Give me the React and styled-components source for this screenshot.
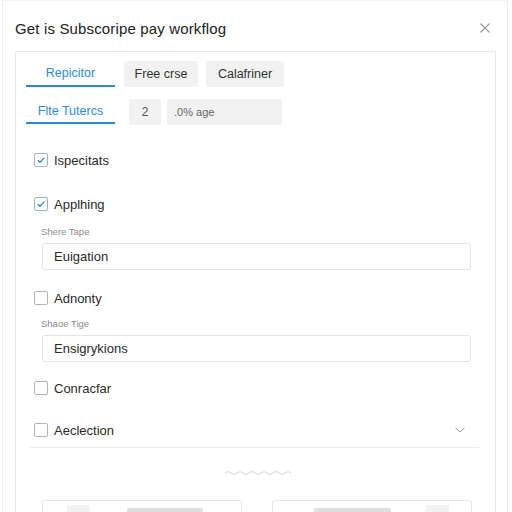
import React from 'react'
import styled, { createGlobalStyle } from 'styled-components'

const Global = createGlobalStyle`
    html, body {
        margin: 0;
        padding: 0;
        background: #ffffff;
    }
    body {
        font-family: "Liberation Sans", Arial, sans-serif;
        color: #2b2b2b;
        overflow: hidden;
    }
`

const Modal = styled.div`
    width: 506px;
    height: 520px;
    margin-left: 2px;
    border-left: 1px solid #ededed;
    border-right: 1px solid #ededed;
    border-top: 1px solid #f3f3f3;
    box-sizing: border-box;
    padding: 0 8px 0 12px;
    overflow: hidden;
`

const Header = styled.div`
    display: flex;
    align-items: center;
    justify-content: space-between;
    height: 50px;
    padding-top: 4px;
    box-sizing: border-box;
`

const Title = styled.h2`
    margin: 0;
    font-size: 15px;
    font-weight: 400;
    color: #222;
    letter-spacing: 0.15px;
`

const Close = styled.button`
    border: 0;
    background: none;
    padding: 0;
    margin-right: 8px;
    width: 12px;
    height: 12px;
    display: flex;
`

const Panel = styled.div`
    width: 481px;
    border: 1px solid #e9e9e9;
    border-bottom: 0;
    padding: 9px 10px 0 10px;
    box-sizing: border-box;
    height: 470px;
`

const TabRow = styled.div`
    display: flex;
    align-items: stretch;
    height: ${p => p.h}px;
    margin-top: ${p => p.mt || 0}px;
`

const Tab = styled.div`
    width: 89px;
    display: flex;
    align-items: center;
    justify-content: center;
    font-size: 12.5px;
    color: #2b8ad6;
    border-bottom: 2px solid #2b8ad6;
    box-sizing: border-box;
    margin-right: ${p => p.mr}px;
`

const Chip = styled.div`
    width: ${p => p.w}px;
    margin-right: ${p => p.mr || 0}px;
    display: flex;
    align-items: center;
    justify-content: ${p => (p.left ? 'flex-start' : 'center')};
    padding-left: ${p => (p.left ? 7 : 0)}px;
    box-sizing: border-box;
    background: #f1f1f1;
    border-radius: 2px;
    font-size: ${p => p.fs || 12.5}px;
    color: ${p => p.c || '#333'};
    box-shadow: ${p => (p.shadow ? '0 1px 1px rgba(0,0,0,0.06)' : 'none')};
`

const List = styled.div`
    padding-left: 8px;
`

const CheckRow = styled.label`
    display: flex;
    align-items: center;
    height: 24px;
    margin-top: ${p => p.mt}px;
    font-size: 13px;
    color: #2a2a2a;
    gap: 6px;
`

const Box = styled.span`
    width: 12px;
    height: 12px;
    border: 1px solid ${p => (p.on ? '#9fb4c6' : '#b2b2b2')};
    border-radius: 2px;
    display: flex;
    align-items: center;
    justify-content: center;
    background: #fff;
    flex-shrink: 0;
`

const Grow = styled.span`
    flex: 1;
`

const FieldLabel = styled.div`
    margin-top: ${p => p.mt}px;
    margin-left: 7px;
    font-size: 9.5px;
    line-height: 14px;
    color: #8a8a8a;
`

const Input = styled.div`
    margin: 4px 0 0 8px;
    width: 429px;
    height: 27px;
    border: 1px solid #e3e3e3;
    border-radius: 3px;
    box-sizing: border-box;
    display: flex;
    align-items: center;
    padding-left: 11px;
    font-size: 13px;
    color: #2a2a2a;
`

const Divider = styled.div`
    margin: 5px 0 0 -4px;
    width: 449px;
    height: 1px;
    background: #ececec;
`

const WaveWrap = styled.div`
    display: flex;
    justify-content: center;
    margin-top: 22px;
    padding-right: 4px;
`

const Cards = styled.div`
    display: flex;
    gap: 30px;
    margin: 24px 0 0 8px;
`

const Card = styled.div`
    width: 200px;
    height: 40px;
    border: 1px solid #e6e6e6;
    border-radius: 2px;
    display: flex;
    align-items: flex-start;
    padding-top: 4px;
    box-sizing: border-box;
    gap: ${p => p.gap}px;
    padding-left: ${p => p.pl}px;
`

const Patch = styled.div`
    width: ${p => p.w}px;
    height: ${p => p.h}px;
    background: ${p => p.bg};
    border-radius: 2px;
    margin-top: ${p => p.mt || 0}px;
`

const Check = () => (
    <svg width="10" height="10" viewBox="0 0 10 10">
        <path d="M1.8 5.2 L4 7.3 L8.4 2.6" fill="none" stroke="#2b8ad6" strokeWidth="1.3" />
    </svg>
)

const Item = ({ on, mt, children, chevron }) => (
    <CheckRow mt={mt}>
        <Box on={on}>{on && <Check />}</Box>
        <span>{children}</span>
        {chevron && (
            <>
                <Grow />
                <svg width="12" height="8" viewBox="0 0 12 8" style={{ marginRight: 19 }}>
                    <path d="M1.5 1.8 L6 6 L10.5 1.8" fill="none" stroke="#9a9a9a" strokeWidth="1" />
                </svg>
            </>
        )}
    </CheckRow>
)

export default function App() {
    return (
        <>
            <Global />
            <Modal>
                <Header>
                    <Title>Get is Subscoripe pay workflog</Title>
                    <Close aria-label="close">
                        <svg width="12" height="12" viewBox="0 0 12 12">
                            <path d="M1.5 1.5 L10.5 10.5 M10.5 1.5 L1.5 10.5" stroke="#9b9b9b" strokeWidth="1.1" />
                        </svg>
                    </Close>
                </Header>
                <Panel>
                    <TabRow h={26}>
                        <Tab mr={9}>Repicitor</Tab>
                        <Chip w={74} mr={8}>Free crse</Chip>
                        <Chip w={78}>Calafriner</Chip>
                    </TabRow>
                    <TabRow h={25} mt={12}>
                        <Tab mr={14}>Flte Tutercs</Tab>
                        <Chip w={32} mr={6} fs={12} c="#555" shadow>2</Chip>
                        <Chip w={115} left fs={11} c="#666" shadow>.0% age</Chip>
                    </TabRow>
                    <List>
                        <Item on mt={24}>Ispecitats</Item>
                        <Item on mt={20}>Applhing</Item>
                        <FieldLabel mt={9}>Shere Tape</FieldLabel>
                        <Input>Euigation</Input>
                        <Item mt={16}>Adnonty</Item>
                        <FieldLabel mt={7}>Shaoe Tige</FieldLabel>
                        <Input>Ensigrykions</Input>
                        <Item mt={14}>Conracfar</Item>
                        <Item mt={18} chevron>Aeclection</Item>
                        <Divider />
                        <WaveWrap>
                            <svg width="66" height="6" viewBox="0 0 66 6">
                                <path
                                    d="M0 3 Q3 0 6 3 T12 3 T18 3 T24 3 T30 3 T36 3 T42 3 T48 3 T54 3 T60 3 T66 3"
                                    fill="none"
                                    stroke="#d4d4d4"
                                    strokeWidth="1"
                                />
                            </svg>
                        </WaveWrap>
                        <Cards>
                            <Card gap={37} pl={24}>
                                <Patch w={23} h={14} bg="#f2f2f2" />
                                <Patch w={76} h={6} bg="#dedede" mt={3} />
                            </Card>
                            <Card gap={35} pl={41}>
                                <Patch w={77} h={6} bg="#dedede" mt={3} />
                                <Patch w={23} h={14} bg="#f2f2f2" />
                            </Card>
                        </Cards>
                    </List>
                </Panel>
            </Modal>
        </>
    )
}
